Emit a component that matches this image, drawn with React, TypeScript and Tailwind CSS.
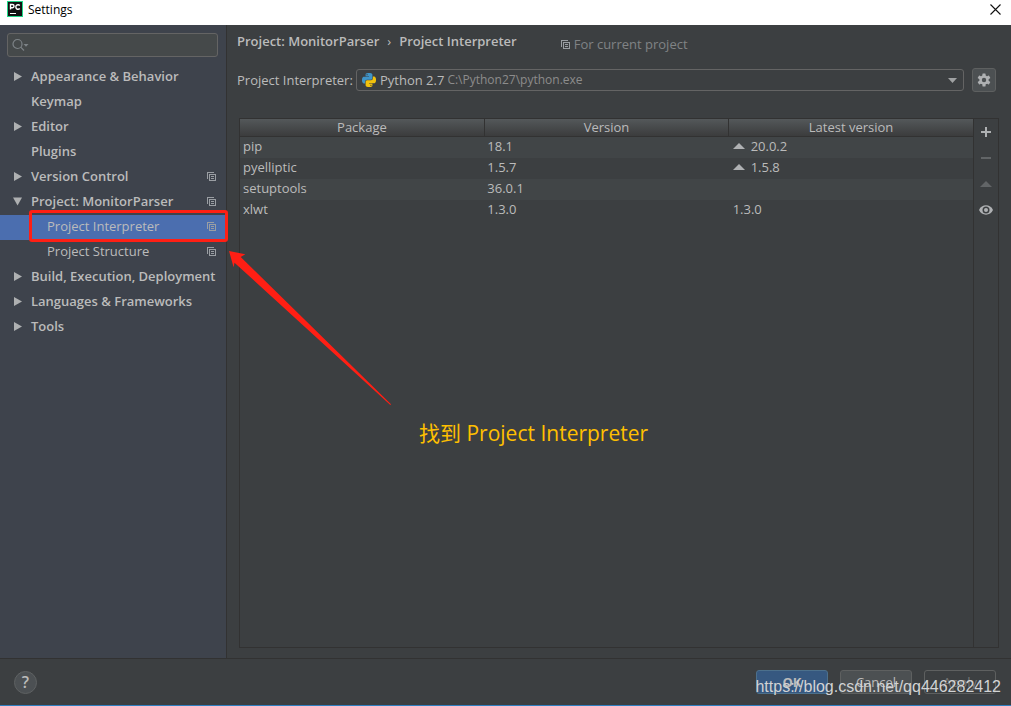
import { useState } from "react";

type TreeItem = {
  label: string;
  arrow?: "right" | "down";
  child?: boolean;
  shared?: boolean;
};

const tree: TreeItem[] = [
  { label: "Appearance & Behavior", arrow: "right" },
  { label: "Keymap" },
  { label: "Editor", arrow: "right" },
  { label: "Plugins" },
  { label: "Version Control", arrow: "right", shared: true },
  { label: "Project: MonitorParser", arrow: "down", shared: true },
  { label: "Project Interpreter", child: true, shared: true },
  { label: "Project Structure", child: true, shared: true },
  { label: "Build, Execution, Deployment", arrow: "right" },
  { label: "Languages & Frameworks", arrow: "right" },
  { label: "Tools", arrow: "right" },
];

const packages = [
  { name: "pip", version: "18.1", latest: "20.0.2", upgrade: true },
  { name: "pyelliptic", version: "1.5.7", latest: "1.5.8", upgrade: true },
  { name: "setuptools", version: "36.0.1", latest: "", upgrade: false },
  { name: "xlwt", version: "1.3.0", latest: "1.3.0", upgrade: false },
];

function CopyIcon() {
  return (
    <svg width="9" height="9" viewBox="0 0 9 9" className="shrink-0" fill="#9a9ea3" shapeRendering="crispEdges">
      <path d="M0 0H7V1H1V7H0Z" />
      <path fillRule="evenodd" d="M2 2H9V9H2ZM3 3V8H8V3Z" />
      <path d="M4 4H7V5H4ZM4 6H7V7H4Z" />
    </svg>
  );
}

function TreeArrow({ dir }: { dir: "right" | "down" }) {
  return (
    <svg width="9" height="9" viewBox="0 0 9 9" fill="#aeb0b1">
      {dir === "right" ? <path d="M1 0L9 4.500L1 9Z" /> : <path d="M0 0.500H9L4.500 8.500Z" />}
    </svg>
  );
}

function Logo() {
  return (
    <svg width="16" height="16" viewBox="0 0 16 16" className="shrink-0">
      <rect width="16" height="16" fill="#21d789" />
      <rect x="1" y="1" width="14" height="14" fill="#111" />
      <path d="M3.5 8.5V3.5H5.4A1.5 1.5 0 0 1 5.4 6.7H3.5" fill="none" stroke="#fff" strokeWidth="1.4" />
      <path d="M12.8 4.4A2.3 2.3 0 1 0 12.8 7.6" fill="none" stroke="#fff" strokeWidth="1.4" />
      <rect x="3" y="12" width="6" height="1" fill="#fff" />
    </svg>
  );
}

function PythonIcon() {
  return (
    <svg width="14" height="14" viewBox="0 0 24 24" className="shrink-0">
      <path fill="#3f94c8" d="M14.25.18l.9.2.73.26.59.3.45.32.34.34.25.34.16.33.1.3.04.26.02.2-.01.13V8.5l-.05.63-.13.55-.21.46-.26.38-.3.31-.33.25-.35.19-.35.14-.33.1-.3.07-.26.04-.21.02H8.77l-.69.05-.59.14-.5.22-.41.27-.33.32-.27.35-.2.36-.15.37-.1.35-.07.32-.04.27-.02.21v3.06H3.17l-.21-.03-.28-.07-.32-.12-.35-.18-.36-.26-.36-.36-.35-.46-.32-.59-.28-.73-.21-.88-.14-1.05-.05-1.23.06-1.22.16-1.04.24-.87.32-.71.36-.57.4-.44.42-.33.42-.24.4-.16.36-.1.32-.05.24-.01h.16l.06.01h8.16v-.83H6.18l-.01-2.75-.02-.37.05-.34.11-.31.17-.28.25-.26.31-.23.38-.2.44-.18.51-.15.58-.12.64-.1.71-.06.77-.04.84-.02 1.27.05zm-6.3 1.98l-.23.33-.08.41.08.41.23.34.33.22.41.09.41-.09.33-.22.23-.34.08-.41-.08-.41-.23-.33-.33-.22-.41-.09-.41.09z" />
      <path fill="#f2c20c" d="M21.04 6.11l.28.06.32.12.35.18.36.27.36.35.35.47.32.59.28.73.21.88.14 1.04.05 1.23-.06 1.23-.16 1.04-.24.86-.32.71-.36.57-.4.45-.42.33-.42.24-.4.16-.36.09-.32.05-.24.02-.16-.01h-8.22v.82h5.84l.01 2.76.02.36-.05.34-.11.31-.17.29-.25.25-.31.24-.38.2-.44.17-.51.15-.58.13-.64.09-.71.07-.77.04-.84.01-1.27-.04-1.07-.14-.9-.2-.73-.25-.59-.3-.45-.33-.34-.34-.25-.34-.16-.33-.1-.3-.04-.25-.02-.2.01-.13v-5.34l.05-.64.13-.54.21-.46.26-.38.3-.32.33-.24.35-.2.35-.14.33-.1.3-.06.26-.04.21-.02.13-.01h5.84l.69-.05.59-.14.5-.21.41-.28.33-.32.27-.35.2-.36.15-.36.1-.35.07-.32.04-.28.02-.21V6.07h2.09l.14.01zm-6.47 14.25l-.23.33-.08.41.08.41.23.33.33.23.41.08.41-.08.33-.23.23-.33.08-.41-.08-.41-.23-.33-.33-.23-.41-.08-.41.08z" />
    </svg>
  );
}

function GearIcon() {
  return (
    <svg width="14" height="14" viewBox="0 0 14 14">
      <g fill="#afb1b3">
        <rect x="5.4" y="0.5" width="3.2" height="13" rx="0.4" />
        <rect x="5.4" y="0.5" width="3.2" height="13" rx="0.4" transform="rotate(60 7 7)" />
        <rect x="5.4" y="0.5" width="3.2" height="13" rx="0.4" transform="rotate(120 7 7)" />
        <circle cx="7" cy="7" r="4.7" />
      </g>
      <circle cx="7" cy="7" r="2.2" fill="#4c5052" />
    </svg>
  );
}

const toolButton = "flex h-[26px] w-6 items-center justify-center";
const footerButton = "h-6 w-[72px] rounded-[3px] border text-center leading-5";

export default function App() {
  const [selected, setSelected] = useState("Project Interpreter");

  return (
    <div className="relative flex h-screen min-h-[400px] flex-col overflow-hidden border-b border-[#2f7fc1] bg-[#3c3f41] font-['Open_Sans','Noto_Sans_CJK_SC',sans-serif] text-[13px] leading-5 text-[#bbbbbb]">
      <header className="flex h-[25px] shrink-0 items-start bg-white pr-[10px] pl-[7px] text-black">
        <div className="flex items-start gap-[5px] pt-px">
          <Logo />
          <h1 className="text-[12px] leading-[18px]">Settings</h1>
        </div>
        <button aria-label="Close" className="mt-1 ml-auto">
          <svg width="11" height="11" viewBox="0 0 11 11" stroke="#111" strokeWidth="1.1">
            <path d="M.5 .5L10.500 10.500M10.500 .5L.5 10.500" />
          </svg>
        </button>
      </header>

      <div className="flex min-h-0 flex-1">
        <aside className="flex w-[227px] shrink-0 flex-col border-r border-[#323232] bg-[#3e434c]">
          <label className="mr-2 ml-[7px] mt-2 flex h-6 items-center rounded-[3px] border border-[#646464] bg-[#45494a] px-1">
            <svg width="17" height="14" viewBox="0 0 17 14" fill="none" stroke="#7d8387" strokeWidth="1.2">
              <circle cx="5.500" cy="6" r="4.500" />
              <path d="M8.700 9.200L12 12.500" />
              <path d="M11.500 6H16.500L14 8.700Z" fill="#7d8387" stroke="none" />
            </svg>
            <input aria-label="Search settings" className="min-w-0 flex-1 bg-transparent px-1 outline-none" />
          </label>
          <nav aria-label="Settings categories" className="mt-2">
            <ul>
              {tree.map((item) => {
                const active = item.label === selected;
                return (
                  <li key={item.label} className="relative">
                    <button
                      onClick={() => setSelected(item.label)}
                      className={`flex h-[25px] w-full items-center pr-[10px] pb-[3px] text-left ${active ? "bg-[#4b6eaf]" : ""} ${item.child ? "pl-[47px]" : "pl-[13px] font-semibold"}`}
                    >
                      {!item.child && (
                        <span className="w-[18px] shrink-0">{item.arrow && <TreeArrow dir={item.arrow} />}</span>
                      )}
                      <span className="flex-1 whitespace-nowrap">{item.label}</span>
                      {item.shared && <CopyIcon />}
                    </button>
                    {item.label === "Project Interpreter" && (
                      <div className="pointer-events-none absolute -top-[5px] -right-[2px] -bottom-[2px] left-[29px] z-10 rounded-[3px] border-[3px] border-[#ff1f14]" />
                    )}
                  </li>
                );
              })}
            </ul>
          </nav>
        </aside>

        <main className="flex min-w-0 flex-1 flex-col pr-3 pb-[10px] pl-3">
          <div className="flex h-[34px] items-center">
            <h2 className="-ml-[2px] flex gap-2 pb-[2px] font-semibold whitespace-nowrap">
              <span>Project: MonitorParser</span>
              <span className="font-normal">›</span>
              <span>Project Interpreter</span>
            </h2>
            <p className="mt-1 ml-11 flex items-center gap-1 whitespace-nowrap text-[#808385]">
              <CopyIcon />
              For current project
            </p>
          </div>

          <div className="mt-[9px] -ml-[2px] flex h-6 items-center pr-[3px]">
            <label htmlFor="interpreter" className="w-[119px] shrink-0 whitespace-nowrap">
              Project Interpreter:
            </label>
            <div className="relative flex h-[22px] min-w-0 flex-1 items-center rounded-[3px] border border-[#646464] pl-[5px]">
              <PythonIcon />
              <span className="ml-1 whitespace-nowrap">Python 2.7</span>
              <select id="interpreter" className="ml-[3px] h-5 min-w-0 flex-1 appearance-none bg-transparent text-[12px] text-[#8c8c8c] outline-none">
                <option>C:\Python27\python.exe</option>
              </select>
              <svg width="9" height="5" viewBox="0 0 9 5" className="pointer-events-none absolute top-2 right-[6px]" fill="#a0a2a3">
                <path d="M0 0H9L4.500 5Z" />
              </svg>
            </div>
            <button aria-label="Interpreter options" className="ml-2 flex size-6 items-center justify-center rounded-[3px] border border-[#5e6060] bg-[#4c5052]">
              <GearIcon />
            </button>
          </div>

          <div className="mt-[26px] flex min-h-0 flex-1 border border-[#323232]">
            <div className="min-w-0 flex-1">
              <table className="w-full table-fixed border-collapse">
                <thead>
                  <tr className="h-[17px] bg-linear-to-b from-[#54585a] to-[#3b3c3d] leading-4">
                    {["Package", "Version", "Latest version"].map((title) => (
                      <th key={title} className="border-r border-b border-[#323232] p-0 font-normal last:border-r-0">
                        {title}
                      </th>
                    ))}
                  </tr>
                </thead>
                <tbody>
                  {packages.map((p) => (
                    <tr key={p.name} className="h-[21px] leading-[19px] odd:bg-[#414547]">
                      <td className="px-[3px] pt-0 pb-[2px]">{p.name}</td>
                      <td className="px-[3px] pt-0 pb-[2px]">{p.version}</td>
                      <td className="px-[3px] pt-0 pb-[2px]">
                        <div className="flex items-center gap-[6px] pl-px">
                          {p.upgrade && (
                            <svg width="12" height="6" viewBox="0 0 12 6" fill="#afb1b3">
                              <path d="M0 6L6 0L12 6Z" />
                            </svg>
                          )}
                          {p.latest}
                        </div>
                      </td>
                    </tr>
                  ))}
                </tbody>
              </table>
            </div>
            <div className="w-[25px] shrink-0 border-l border-[#323232]">
              <button aria-label="Install package" className={toolButton}>
                <svg width="10" height="10" viewBox="0 0 10 10" fill="#afb1b3">
                  <path d="M4 0H6V4H10V6H6V10H4V6H0V4H4Z" />
                </svg>
              </button>
              <button aria-label="Uninstall package" className={toolButton}>
                <svg width="10" height="2" viewBox="0 0 10 2" fill="#626567">
                  <path d="M0 0H10V2H0Z" />
                </svg>
              </button>
              <button aria-label="Upgrade package" className={toolButton}>
                <svg width="12" height="6" viewBox="0 0 12 6" fill="#626567">
                  <path d="M0 6L6 0L12 6Z" />
                </svg>
              </button>
              <button aria-label="Show early releases" className={toolButton}>
                <svg width="14" height="10" viewBox="0 0 14 10">
                  <path d="M0 5C2.500-1.200 11.500-1.200 14 5C11.500 11.200 2.500 11.200 0 5Z" fill="#afb1b3" />
                  <circle cx="7" cy="5" r="3.500" fill="#3c3f41" />
                  <circle cx="7" cy="5" r="2" fill="#afb1b3" />
                </svg>
              </button>
            </div>
          </div>
        </main>
      </div>

      <footer className="flex h-[47px] shrink-0 items-center gap-3 border-t border-[#323232] pr-[15px] pl-[14px]">
        <button aria-label="Help" className="mr-auto flex size-[23px] items-center justify-center rounded-full border border-[#5e6162] bg-[#4c5053] text-[16px] font-semibold">
          ?
        </button>
        <button className={`${footerButton} border-[#4c708c] bg-[#365880] font-bold`}>OK</button>
        <button className={`${footerButton} border-[#5e6060] bg-[#4c5052]`}>Cancel</button>
        <button className={`${footerButton} border-[#5e6060] text-[#777777]`}>Apply</button>
      </footer>

      <svg className="pointer-events-none absolute top-[250px] left-[228px] z-20" width="166" height="158" viewBox="228 250 166 158" fill="#ff1f14">
        <path d="M229 251L245.300 254.300L240.700 257L391 404.300L390.300 405L234.500 262.700L233.600 267.200Z" />
      </svg>
      <p className="pointer-events-none absolute top-[418px] left-[419px] z-20 text-[21px] leading-[30px] whitespace-nowrap text-[#ffc000]">
        找到 Project Interpreter
      </p>
      <p className="pointer-events-none absolute right-[10px] bottom-[8px] z-20 font-['Liberation_Sans',sans-serif] text-[16px] whitespace-nowrap text-[#d2d3d4]">
        https://blog.csdn.net/qq446282412
      </p>
    </div>
  );
}
